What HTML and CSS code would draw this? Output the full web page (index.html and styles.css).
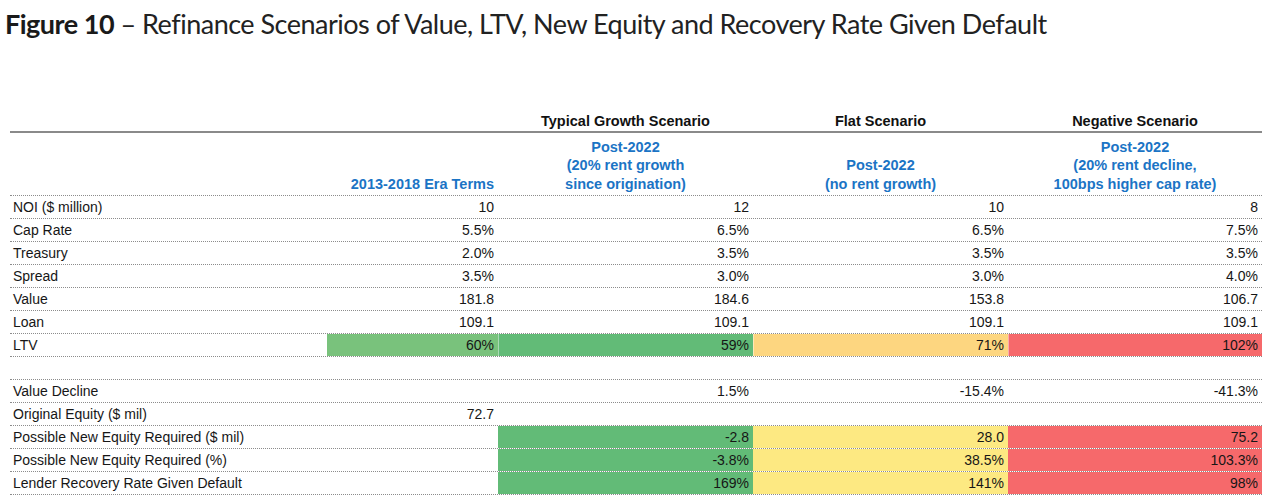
FILE: index.html
```html
<!DOCTYPE html>
<html lang="en">
<head>
<meta charset="utf-8">
<title>Figure 10</title>
<link rel="stylesheet" href="styles.css">
</head>
<body>
<div class="figure">
  <h1 class="title"><b>Figure 10</b> – Refinance Scenarios of Value, LTV, New Equity and Recovery Rate Given Default</h1>
  <div class="table">
    <div class="row group-head">
      <div class="cell"></div>
      <div class="cell"></div>
      <div class="cell center">Typical Growth Scenario</div>
      <div class="cell center">Flat Scenario</div>
      <div class="cell center">Negative Scenario</div>
    </div>
    <div class="row sub-head">
      <div class="cell"></div>
      <div class="cell num">2013-2018 Era Terms</div>
      <div class="cell center">Post-2022<br>(20% rent growth<br>since origination)</div>
      <div class="cell center">Post-2022<br>(no rent growth)</div>
      <div class="cell center">Post-2022<br>(20% rent decline,<br>100bps higher cap rate)</div>
    </div>
    <div class="row">
      <div class="cell label">NOI ($ million)</div>
      <div class="cell num">10</div>
      <div class="cell num">12</div>
      <div class="cell num">10</div>
      <div class="cell num">8</div>
    </div>
    <div class="row">
      <div class="cell label">Cap Rate</div>
      <div class="cell num">5.5%</div>
      <div class="cell num">6.5%</div>
      <div class="cell num">6.5%</div>
      <div class="cell num">7.5%</div>
    </div>
    <div class="row">
      <div class="cell label">Treasury</div>
      <div class="cell num">2.0%</div>
      <div class="cell num">3.5%</div>
      <div class="cell num">3.5%</div>
      <div class="cell num">3.5%</div>
    </div>
    <div class="row">
      <div class="cell label">Spread</div>
      <div class="cell num">3.5%</div>
      <div class="cell num">3.0%</div>
      <div class="cell num">3.0%</div>
      <div class="cell num">4.0%</div>
    </div>
    <div class="row">
      <div class="cell label">Value</div>
      <div class="cell num">181.8</div>
      <div class="cell num">184.6</div>
      <div class="cell num">153.8</div>
      <div class="cell num">106.7</div>
    </div>
    <div class="row">
      <div class="cell label">Loan</div>
      <div class="cell num">109.1</div>
      <div class="cell num">109.1</div>
      <div class="cell num">109.1</div>
      <div class="cell num">109.1</div>
    </div>
    <div class="row ltv">
      <div class="cell label">LTV</div>
      <div class="cell num light-green">60%</div>
      <div class="cell num green">59%</div>
      <div class="cell num amber">71%</div>
      <div class="cell num red">102%</div>
    </div>
    <div class="row">
      <div class="cell"></div>
      <div class="cell"></div>
      <div class="cell"></div>
      <div class="cell"></div>
      <div class="cell"></div>
    </div>
    <div class="row">
      <div class="cell label">Value Decline</div>
      <div class="cell num"></div>
      <div class="cell num">1.5%</div>
      <div class="cell num">-15.4%</div>
      <div class="cell num">-41.3%</div>
    </div>
    <div class="row">
      <div class="cell label">Original Equity ($ mil)</div>
      <div class="cell num">72.7</div>
      <div class="cell num"></div>
      <div class="cell num"></div>
      <div class="cell num"></div>
    </div>
    <div class="row">
      <div class="cell label">Possible New Equity Required ($ mil)</div>
      <div class="cell num"></div>
      <div class="cell num green">-2.8</div>
      <div class="cell num yellow">28.0</div>
      <div class="cell num red">75.2</div>
    </div>
    <div class="row">
      <div class="cell label">Possible New Equity Required (%)</div>
      <div class="cell num"></div>
      <div class="cell num green">-3.8%</div>
      <div class="cell num yellow">38.5%</div>
      <div class="cell num red">103.3%</div>
    </div>
    <div class="row">
      <div class="cell label">Lender Recovery Rate Given Default</div>
      <div class="cell num"></div>
      <div class="cell num green">169%</div>
      <div class="cell num yellow">141%</div>
      <div class="cell num red">98%</div>
    </div>
  </div>
</div>
</body>
</html>
```

FILE: styles.css
```css
html, body {
  margin: 0;
  padding: 0;
  background: #ffffff;
}

.figure {
  width: 1280px;
}

.title {
  margin: 0;
  padding: 6px 0 0 5px;
  height: 36px;
  font-family: "Lato", "Open Sans", sans-serif;
  font-size: 27px;
  letter-spacing: -0.5px;
  line-height: 36px;
  font-weight: 400;
  color: #222222;
  white-space: nowrap;
}

.title b {
  font-weight: 700;
  color: #1a1a1a;
}

.table {
  margin: 69px 0 0 10px;
  width: 1252px;
  font-family: "Liberation Sans", Arial, sans-serif;
  font-size: 14px;
  color: #161616;
}

.row {
  display: grid;
  grid-template-columns: 317px 171px 255px 255px 254px;
  height: 22px;
  border-bottom: 1px dotted #8c8c8c;
}

.cell {
  display: flex;
  align-items: center;
  line-height: 22px;
  white-space: nowrap;
}

.label {
  padding-left: 3px;
}

.num {
  justify-content: flex-end;
  padding-right: 4px;
}

.center {
  justify-content: center;
  text-align: center;
}

.group-head {
  height: 20px;
  border-bottom: 2px solid #8a8a8a;
  font-weight: 700;
  font-size: 14.5px;
  color: #111111;
}

.group-head .cell {
  line-height: 20px;
}

.sub-head {
  height: 62px;
  font-weight: 700;
  font-size: 14.5px;
  color: #1b74c5;
}

.sub-head .cell {
  align-items: flex-end;
  line-height: 18.5px;
  padding-bottom: 2px;
}

.light-green { background: #79c27c; }
.green { background: #62bb77; }
.amber { background: #fdd680; }
.yellow { background: #fde982; }
.red { background: #f6696b; }

.ltv .green,
.ltv .amber,
.ltv .red {
  box-shadow: inset 1px 0 0 rgba(255, 255, 255, 0.45);
}
```
